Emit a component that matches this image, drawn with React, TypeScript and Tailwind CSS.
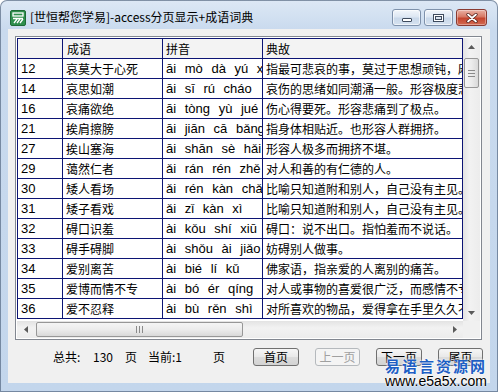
import React from 'react';

const cjk = "font-['SimSun','Noto_Sans_CJK_SC',sans-serif]";
const latin = "font-['Liberation_Sans','Noto_Sans_CJK_SC',sans-serif]";

const rows: [string, string, string, string][] = [
  ['12', '哀莫大于心死', 'āi mò dà yú xīn sǐ', '指最可悲哀的事，莫过于思想顽钝，麻木不仁。'],
  ['14', '哀思如潮', 'āi sī rú cháo', '哀伤的思绪如同潮涌一般。形容极度悲伤。'],
  ['16', '哀痛欲绝', 'āi tòng yù jué', '伤心得要死。形容悲痛到了极点。'],
  ['21', '挨肩擦膀', 'āi jiān cā bǎng', '指身体相贴近。也形容人群拥挤。'],
  ['27', '挨山塞海', 'āi shān sè hǎi', '形容人极多而拥挤不堪。'],
  ['29', '蔼然仁者', 'ǎi rán rén zhě', '对人和善的有仁德的人。'],
  ['30', '矮人看场', 'ǎi rén kàn chǎng', '比喻只知道附和别人，自己没有主见。'],
  ['31', '矮子看戏', 'ǎi zǐ kàn xì', '比喻只知道附和别人，自己没有主见。'],
  ['32', '碍口识羞', 'ài kǒu shí xiū', '碍口：说不出口。指怕羞而不说话。'],
  ['33', '碍手碍脚', 'ài shǒu ài jiǎo', '妨碍别人做事。'],
  ['34', '爱别离苦', 'ài bié lí kǔ', '佛家语，指亲爱的人离别的痛苦。'],
  ['35', '爱博而情不专', 'ài bó ér qíng bù zhuān', '对人或事物的喜爱很广泛，而感情不专一。'],
  ['36', '爱不忍释', 'ài bù rěn shì', '对所喜欢的物品，爱得拿在手里久久不愿放下。'],
];

function Cell({ w, children, className = '' }: { w: string; children?: React.ReactNode; className?: string }) {
  return (
    <div className={`${w} h-[20px] shrink-0 overflow-hidden whitespace-nowrap border-r border-b border-[#0c1474] leading-[19px] text-black ${className}`}>
      {children}
    </div>
  );
}

function Arrow({ dir }: { dir: 'up' | 'down' | 'left' | 'right' }) {
  const pts = {
    up: '1,5 4.5,1 8,5',
    down: '1,1 4.5,5 8,1',
    left: '5,1 1,4.5 5,8',
    right: '1,1 5,4.5 1,8',
  }[dir];
  const size = dir === 'up' || dir === 'down' ? { w: 9, h: 6 } : { w: 6, h: 9 };
  return (
    <svg width={size.w} height={size.h} viewBox={`0 0 ${size.w} ${size.h}`}>
      <polygon points={pts} fill="#5a5a5a" />
    </svg>
  );
}

function TitleButton({ kind }: { kind: 'min' | 'max' | 'close' }) {
  if (kind === 'close') {
    return (
      <div className="w-[31px] h-[17px] rounded-[3px] border border-[#8a3b32] bg-[linear-gradient(180deg,#eab2a4_0%,#d77864_45%,#c4452e_55%,#d36a52_100%)] flex items-center justify-center shadow-[inset_0_0_0_1px_rgba(255,255,255,0.35)]">
        <svg width="12" height="10" viewBox="0 0 12 10">
          <path d="M2 1.5 L10 8.5 M10 1.5 L2 8.5" stroke="#4a1a14" strokeWidth="3.2" strokeLinecap="round" />
          <path d="M2 1.5 L10 8.5 M10 1.5 L2 8.5" stroke="#ffffff" strokeWidth="1.8" strokeLinecap="round" />
        </svg>
      </div>
    );
  }
  return (
    <div className="w-[29px] h-[17px] rounded-[3px] border border-[#7e91ab] bg-[linear-gradient(180deg,#f2f6fb_0%,#dde7f3_45%,#c9d8ea_55%,#d6e2f0_100%)] flex items-center justify-center shadow-[inset_0_0_0_1px_rgba(255,255,255,0.6)]">
      {kind === 'min' ? (
        <div className="mt-[5px] w-[10px] h-[4px] rounded-[1px] border border-[#3e4b5e] bg-white" />
      ) : (
        <div className="w-[11px] h-[8px] border border-[#3e4b5e] bg-white flex items-center justify-center">
          <div className="w-[7px] h-[4px] border border-[#3e4b5e] bg-[#dbe5f1]" />
        </div>
      )}
    </div>
  );
}

function PageButton({ label, disabled }: { label: string; disabled?: boolean }) {
  return (
    <div
      className={`h-[18px] rounded-[3px] border flex items-center justify-center text-[12px] ${cjk} ${
        disabled
          ? 'border-[#b5b9bd] bg-[#f4f4f4] text-[#a0a0a0]'
          : 'border-[#707070] bg-[linear-gradient(180deg,#f6f6f6_0%,#e9e9e9_48%,#dcdcdc_52%,#d3d3d3_100%)] text-black'
      }`}
    >
      {label}
    </div>
  );
}

export default function App() {
  return (
    <div className="relative w-[498px] h-[392px] overflow-hidden rounded-t-[7px] bg-[linear-gradient(180deg,#dde8f5_0%,#c9daee_30px,#c3d6ec_100%)] shadow-[inset_0_0_0_1px_rgba(52,72,100,0.55)]">
      {/* 标题栏 */}
      <div className="h-[29px] flex items-start">
        <div className="mt-[10px] ml-[10px] w-[16px] h-[16px] rounded-[2px] bg-[#2f8f4e] border border-[#1d6b36] flex items-center justify-center">
          <svg width="12" height="12" viewBox="0 0 12 12">
            <rect x="1" y="1" width="10" height="3" fill="none" stroke="#fff" strokeWidth="1.3" />
            <path d="M1 6.5 H11 M2 11 L5 7 M5 11 L8 7 M8 11 L11 7" stroke="#fff" strokeWidth="1.3" fill="none" />
          </svg>
        </div>
        <div className={`ml-[4px] mt-[9px] text-[12px] leading-[16px] text-black ${cjk}`}>
          [世恒帮您学易]-access分页显示+成语词典
        </div>
        <div className="ml-auto mr-[11px] mt-[9px] flex gap-[3px]">
          <TitleButton kind="min" />
          <TitleButton kind="max" />
          <TitleButton kind="close" />
        </div>
      </div>

      {/* 客户区 */}
      <div className="ml-[8px] w-[482px] h-[354px] bg-[#f0f0f0]">
        <div className="ml-[7px] pt-[7px]">
          <div className="w-[467px] h-[304px] border border-[#828790] bg-white p-px">
            <div className="flex h-[283px]">
              <div className="w-[446px] h-[283px] overflow-hidden">
                <div className="border-l border-t border-[#0c1474]">
                  <div className="flex bg-[#f3f3f3]">
                    <Cell w="w-[45px]" />
                    <Cell w="w-[100px]" className={`pl-[4px] text-[12px] ${cjk}`}>成语</Cell>
                    <Cell w="w-[100px]" className={`pl-[3px] text-[12px] ${cjk}`}>拼音</Cell>
                    <Cell w="w-[200px]" className={`pl-[3px] text-[12px] ${cjk}`}>典故</Cell>
                  </div>
                  {rows.map(([id, word, pinyin, story]) => (
                    <div key={id} className="flex bg-white">
                      <Cell w="w-[45px]" className={`pl-[3px] text-[13px] ${latin}`}>{id}</Cell>
                      <Cell w="w-[100px]" className={`pl-[3px] text-[12px] ${cjk}`}>{word}</Cell>
                      <Cell w="w-[100px]" className={`pl-[3px] text-[13px] [word-spacing:5px] ${latin}`}>{pinyin}</Cell>
                      <Cell w="w-[200px]" className={`pl-[3px] text-[12px] ${cjk}`}>{story}</Cell>
                    </div>
                  ))}
                </div>
              </div>
              {/* 垂直滚动条 */}
              <div className="w-[17px] h-[283px] flex flex-col bg-[linear-gradient(90deg,#e3e3e3_0%,#f2f2f2_40%,#ececec_100%)]">
                <div className="h-[17px] flex items-center justify-center"><Arrow dir="up" /></div>
                <div className="mt-[3px] mx-[1px] h-[30px] rounded-[2px] border border-[#979797] bg-[linear-gradient(90deg,#f5f5f5_0%,#ececec_50%,#d9d9d9_100%)] flex flex-col items-center justify-center gap-[2px]">
                  <div className="w-[7px] h-px bg-[#8a8a8a]" />
                  <div className="w-[7px] h-px bg-[#8a8a8a]" />
                  <div className="w-[7px] h-px bg-[#8a8a8a]" />
                </div>
                <div className="mt-auto h-[17px] flex items-center justify-center"><Arrow dir="down" /></div>
              </div>
            </div>
            {/* 水平滚动条 */}
            <div className="flex h-[17px]">
              <div className="w-[446px] h-[17px] flex items-center bg-[linear-gradient(180deg,#e3e3e3_0%,#f2f2f2_40%,#ececec_100%)]">
                <div className="w-[17px] h-[17px] flex items-center justify-center"><Arrow dir="left" /></div>
                <div className="ml-[2px] w-[207px] h-[15px] rounded-[2px] border border-[#979797] bg-[linear-gradient(180deg,#f5f5f5_0%,#ececec_50%,#d9d9d9_100%)] flex items-center justify-center gap-[2px]">
                  <div className="w-px h-[7px] bg-[#8a8a8a]" />
                  <div className="w-px h-[7px] bg-[#8a8a8a]" />
                  <div className="w-px h-[7px] bg-[#8a8a8a]" />
                </div>
                <div className="ml-auto w-[17px] h-[17px] flex items-center justify-center"><Arrow dir="right" /></div>
              </div>
              <div className="w-[17px] h-[17px] bg-[#f0f0f0]" />
            </div>
          </div>
        </div>

        {/* 分页栏 */}
        <div className="mt-[8px] h-[18px] flex items-center text-[12px] text-black">
          <span className={`ml-[45px] w-[40px] ${cjk}`}>总共:</span>
          <span className={`w-[32px] ${cjk}`}>130</span>
          <span className={`w-[23px] ${cjk}`}>页</span>
          <span className={`w-[65px] ${cjk}`}>当前:1</span>
          <span className={`w-[40px] ${cjk}`}>页</span>
          <div className="w-[46px]"><PageButton label="首页" /></div>
          <div className="ml-[16px] w-[45px]"><PageButton label="上一页" disabled /></div>
          <div className="ml-[16px] w-[46px]"><PageButton label="下一页" /></div>
          <div className="ml-[16px] w-[45px]"><PageButton label="尾页" /></div>
        </div>
      </div>

      {/* 水印 */}
      <div className="absolute left-[385px] top-[357px] flex flex-col items-start whitespace-nowrap">
        <div className={`text-[15px] leading-[17px] font-bold tracking-[2px] text-[#1e5fc4] [text-shadow:0_0_2px_#fff,0_0_2px_#fff] ${cjk}`}>
          易语言资源网
        </div>
        <div className="text-[14px] leading-[15px] text-black [text-shadow:0_0_2px_#fff,0_0_2px_#fff] font-['Liberation_Sans',sans-serif]">
          www.e5a5x.com
        </div>
      </div>
    </div>
  );
}
